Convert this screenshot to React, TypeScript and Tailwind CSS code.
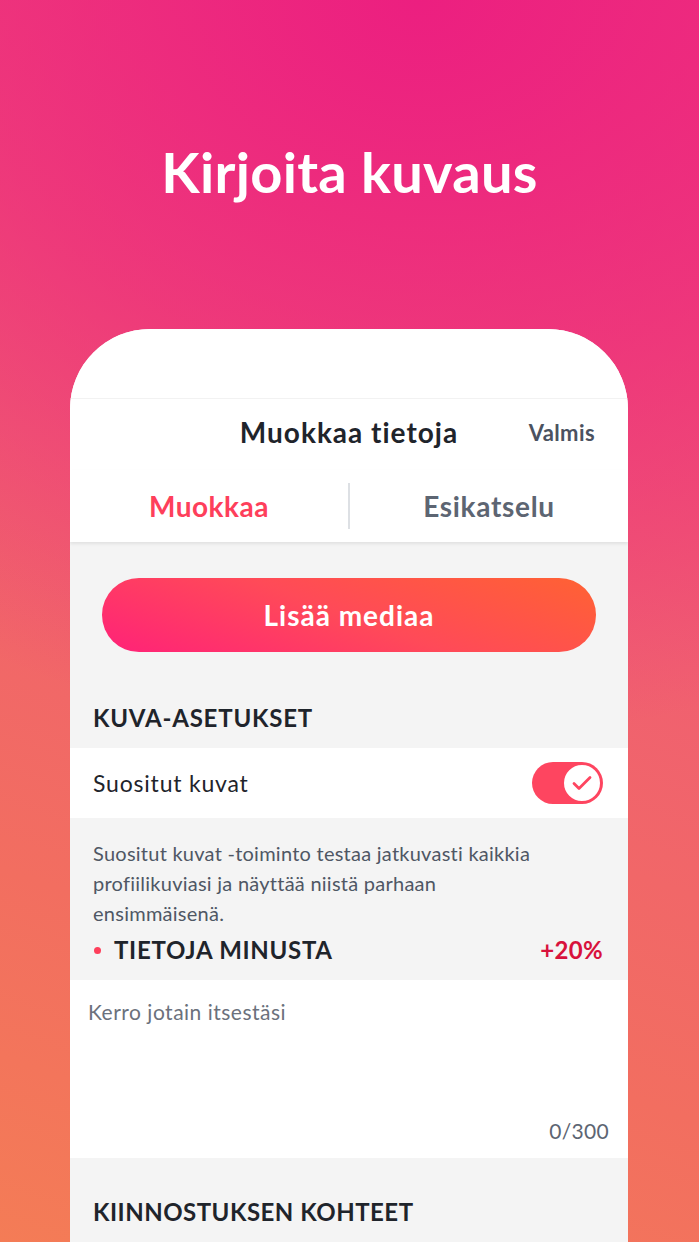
import React from 'react';

const font = { fontFamily: 'Lato, "Noto Sans", sans-serif' };

function Toggle() {
  return (
    <div className="relative h-[42px] w-[71px] rounded-full bg-[#fe4560]">
      <div className="absolute right-[1px] top-[1px] flex h-[40px] w-[40px] items-center justify-center rounded-full border-2 border-[#fe4560] bg-white">
        <svg width="20" height="16" viewBox="0 0 20 16" fill="none">
          <path d="M2 8.5l5 5L18 2.5" stroke="#fe4560" strokeWidth="2.8" strokeLinecap="round" strokeLinejoin="round" />
        </svg>
      </div>
    </div>
  );
}

export default function App() {
  return (
    <div
      className="h-[1242px] w-full overflow-hidden bg-[radial-gradient(ellipse_130%_60%_at_60%_0%,#ec1f80_0%,rgba(236,31,128,0.55)_50%,rgba(236,31,128,0)_100%),linear-gradient(200deg,#f0437a_0%,#f06070_45%,#f26e60_75%,#f47c56_100%)]"
      style={font}
    >
      <h1 className="pt-[137px] text-center text-[56px] font-bold leading-[70px] tracking-[0.3px] text-white">
        Kirjoita kuvaus
      </h1>

      <div className="ml-[70px] mt-[122px] w-[558px] overflow-hidden rounded-t-[80px] bg-[#f4f4f4]">
        {/* header */}
        <div className="h-[69px] bg-white" />
        <div className="border-t border-[#f2f2f2] bg-white">
          <div className="relative flex h-[71px] items-center justify-center pb-[5px]">
            <span className="text-[28px] font-bold tracking-[1px] text-[#1f242b]">Muokkaa tietoja</span>
            <span className="absolute right-[33px] text-[22px] font-bold tracking-[0.4px] text-[#4b5260]">Valmis</span>
          </div>
          <div className="flex h-[72px] items-center shadow-[0_2px_3px_rgba(0,0,0,0.08)]">
            <div className="flex flex-1 justify-center text-[28px] font-bold tracking-[0.5px] text-[#fe3f5b]">Muokkaa</div>
            <div className="h-[46px] w-[2px] bg-[#dde0e4]" />
            <div className="flex flex-1 justify-center text-[28px] font-bold tracking-[0.7px] text-[#5d6572]">Esikatselu</div>
          </div>
        </div>

        {/* add media */}
        <div className="px-[32px] pt-[36px]">
          <button className="flex h-[74px] w-full items-center justify-center rounded-full bg-[linear-gradient(20deg,#ff2278_0%,#ff4a58_50%,#ff6233_100%)] text-[28px] font-bold tracking-[1px] text-white">
            Lisää mediaa
          </button>
        </div>

        <div className="flex h-[96px] items-center px-[23px] pt-[36px]">
          <span className="text-[24px] font-bold tracking-[0.8px] text-[#1f242b]">KUVA-ASETUKSET</span>
        </div>

        <div className="flex h-[70px] items-center justify-between bg-white pl-[23px] pr-[25px]">
          <span className="text-[23px] tracking-[0.8px] text-[#1f242b]">Suositut kuvat</span>
          <Toggle />
        </div>

        <div className="px-[23px] pt-[20px]">
          <p className="max-w-[450px] text-[20px] leading-[30px] tracking-[0.25px] text-[#4f5764]">
            Suositut kuvat -toiminto testaa jatkuvasti kaikkia profiilikuviasi ja näyttää niistä parhaan ensimmäisenä.
          </p>
          <div className="flex h-[52px] items-center justify-between pb-[8px] pr-[2px]">
            <div className="flex items-center">
              <span className="ml-[1px] mr-[13px] h-[7px] w-[7px] rounded-full bg-[#fe3f5b]" />
              <span className="text-[24px] font-bold tracking-[0.7px] text-[#1f242b]">TIETOJA MINUSTA</span>
            </div>
            <span className="text-[24px] font-bold tracking-[0.3px] text-[#d8123c]">+20%</span>
          </div>
        </div>

        <div className="flex h-[178px] flex-col justify-between bg-white pb-[12px] pl-[18px] pr-[19px] pt-[16px]">
          <span className="text-[21px] tracking-[0.5px] text-[#6b717c]">Kerro jotain itsestäsi</span>
          <span className="self-end text-[21px] tracking-[0.3px] text-[#5d6572]">0/300</span>
        </div>

        <div className="flex h-[120px] items-start px-[23px] pt-[36px]">
          <span className="text-[24px] font-bold tracking-[0.5px] text-[#1f242b]">KIINNOSTUKSEN KOHTEET</span>
        </div>
      </div>
    </div>
  );
}
